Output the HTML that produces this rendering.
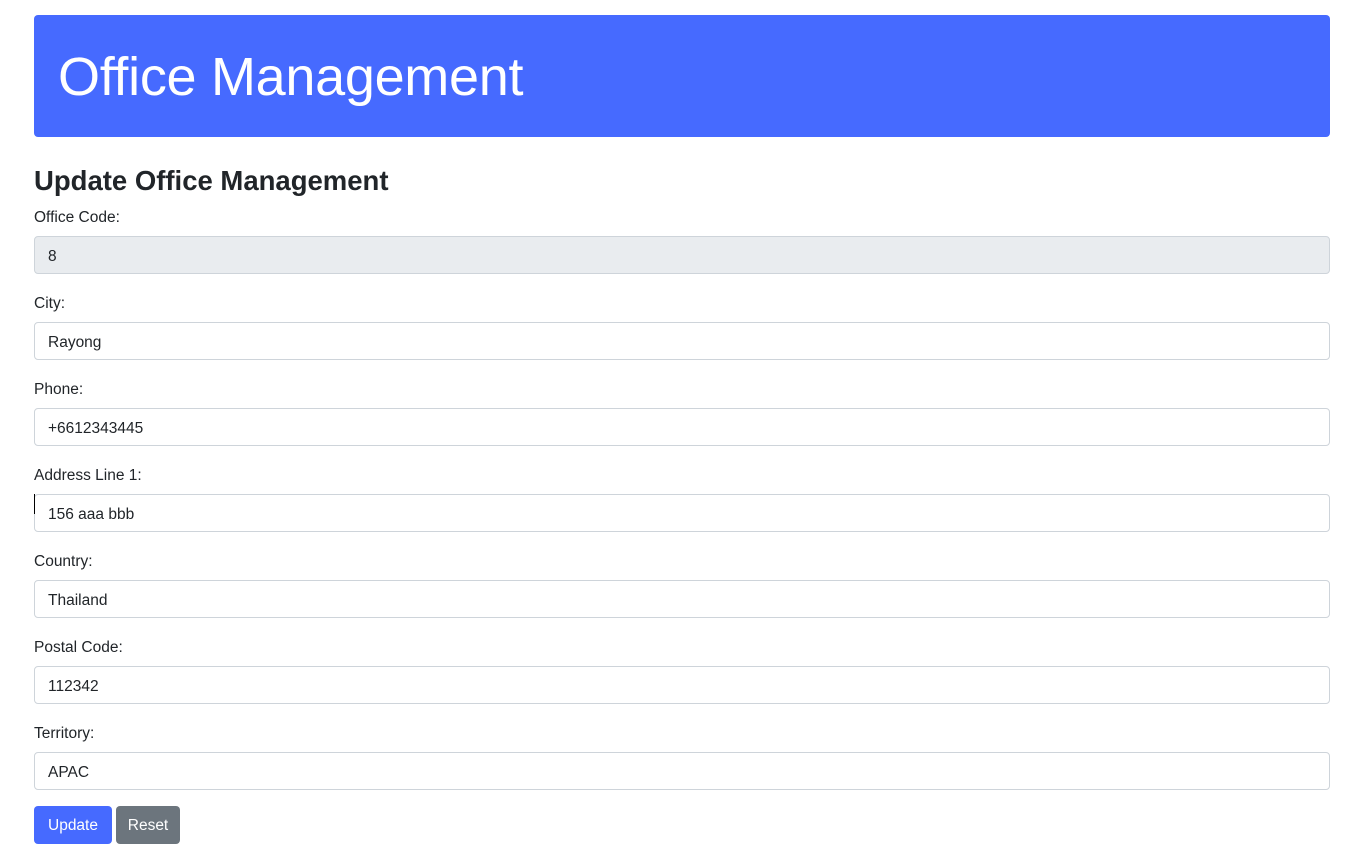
<!DOCTYPE html>
<html><head><meta charset="utf-8"><style>
*{box-sizing:border-box;margin:0;padding:0}
body{width:1353px;height:858px;background:#fff;font-family:"Liberation Sans",sans-serif;color:#212529;position:relative;overflow:hidden}
.hdr{position:absolute;left:34px;top:15px;width:1296px;height:122px;background:#466aff;border-radius:4px}
.hdr h1{position:absolute;left:24px;top:40px;font-weight:300;font-size:54px;color:#fff;line-height:44px;letter-spacing:-0.3px}
h2{position:absolute;left:34px;top:165px;font-size:27.5px;font-weight:bold;line-height:32px}
.lbl{position:absolute;left:34px;font-size:15.5px;line-height:18px;margin-top:2px}
.inp{position:absolute;left:34px;width:1296px;height:38px;border:1px solid #ced4da;border-radius:4px;padding-left:13px;font-size:15.5px;line-height:40px;background:#fff}
.ro{background:#e9ecef}
.btn{position:absolute;top:806px;height:38px;border-radius:4px;color:#fff;font-size:15.5px;line-height:40px;text-align:center}
</style></head><body>
<div class="hdr"><h1>Office Management</h1></div>
<h2>Update Office Management</h2>
<div class="lbl" style="top:207px">Office Code:</div><div class="inp ro" style="top:236px">8</div>
<div class="lbl" style="top:293px">City:</div><div class="inp" style="top:322px">Rayong</div>
<div class="lbl" style="top:379px">Phone:</div><div class="inp" style="top:408px">+6612343445</div>
<div class="lbl" style="top:465px">Address Line 1:</div><div class="inp" style="top:494px">156 aaa bbb</div>
<div style="position:absolute;left:34px;top:494px;width:1px;height:20px;background:#000"></div>
<div class="lbl" style="top:551px">Country:</div><div class="inp" style="top:580px">Thailand</div>
<div class="lbl" style="top:637px">Postal Code:</div><div class="inp" style="top:666px">112342</div>
<div class="lbl" style="top:723px">Territory:</div><div class="inp" style="top:752px">APAC</div>
<div class="btn" style="left:34px;width:78px;background:#466aff">Update</div>
<div class="btn" style="left:116px;width:64px;background:#6c757d">Reset</div>
</body></html>
